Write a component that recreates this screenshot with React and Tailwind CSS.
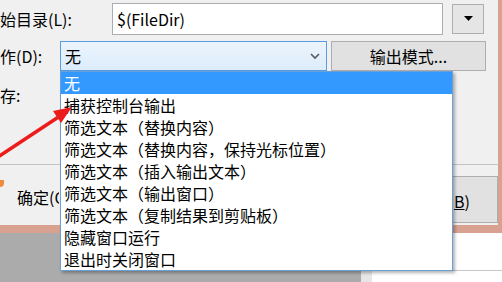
import React from "react";

const items = [
  "无",
  "捕获控制台输出",
  "筛选文本（替换内容）",
  "筛选文本（替换内容，保持光标位置）",
  "筛选文本（插入输出文本）",
  "筛选文本（输出窗口）",
  "筛选文本（复制结果到剪贴板）",
  "隐藏窗口运行",
  "退出时关闭窗口",
];

const font = { fontFamily: '"Noto Sans CJK SC", "Noto Sans", sans-serif' };

const App = () => {
  return (
    <div
      className="relative w-[502px] h-[282px] overflow-hidden bg-[#f0f0f0] text-black text-[16px]"
      style={font}
    >
      {/* dialog */}
      <div className="h-[233px] border-r-4 border-b-8 border-[#d9a18f] flex flex-col">
        {/* start dir row */}
        <div className="mt-[3px] h-[32px] flex items-center">
          <span className="w-[112px] leading-none">始目录(L):</span>
          <div className="w-[331px] h-[32px] bg-white border border-[#abadb3] flex items-center pl-[4px]">
            $(FileDir)
          </div>
          <div className="ml-[9px] w-[32px] h-[30px] border border-[#adadad] bg-[#e5e5e5] flex items-center justify-center">
            <svg width="9" height="6" viewBox="0 0 9 6">
              <polygon points="0,0 9,0 4.5,5" fill="#000" />
            </svg>
          </div>
        </div>

        {/* action row */}
        <div className="mt-[6px] h-[30px] flex items-center">
          <span className="w-[60px] leading-none">作(D):</span>
          <div className="w-[267px] h-[30px] border border-[#569de5] bg-gradient-to-b from-[#ecf4fc] to-[#dcecfc] flex items-center justify-between pl-[4px] pr-[6px]">
            <span>无</span>
            <svg width="10" height="7" viewBox="0 0 10 7">
              <polyline points="1,1 5,5 9,1" fill="none" stroke="#5a5a5a" strokeWidth="1.6" />
            </svg>
          </div>
          <div className="ml-[4px] w-[155px] h-[30px] border border-[#adadad] bg-[#e1e1e1] flex items-center justify-center">
            输出模式...
          </div>
        </div>

        {/* save row */}
        <div className="mt-[14px] h-[20px] flex items-center">
          <span className="leading-none">存:</span>
        </div>

        {/* separator */}
        <div className="mt-[59px] h-px bg-[#c4c4c4]" />

        {/* buttons row */}
        <div className="flex-1 flex">
          <div className="w-[4px] h-[7px] mt-[15px] bg-[#f08a3c] rounded-br-full" />
          <span className="ml-[13px] mt-[24px] w-[42px] h-[18px] leading-none overflow-hidden whitespace-nowrap">
            确定(O)
          </span>
          <div className="ml-auto w-[46px] mt-[11px] mb-[2px] border border-[#adadad] bg-[#e1e1e1] flex items-center pl-[1px] pt-[2px]">
            <span className="underline">B</span>)
          </div>
        </div>
      </div>

      {/* desktop behind */}
      <div className="h-[49px] flex">
        <div className="w-[361px] bg-[#ababab]" />
        <div className="w-[11px] bg-[#e6e6e6]" />
        <div className="flex-1 bg-white">
          <div className="mt-[37px] h-px bg-[#c8c8c8]" />
        </div>
      </div>

      {/* opened dropdown list */}
      <div className="absolute left-[60px] top-[71px] w-[393px] bg-white border border-[#6a9fd8] shadow-[2px_2px_3px_rgba(0,0,0,0.3)]">
        {items.map((item, i) => (
          <div
            key={item}
            className={`h-[22px] leading-[22px] pl-[3px] whitespace-nowrap ${
              i === 0 ? "bg-[#3399ff] text-white" : "text-black"
            }`}
          >
            {item}
          </div>
        ))}
      </div>

      {/* red annotation arrow */}
      <svg className="absolute left-0 top-0 pointer-events-none" width="502" height="282">
        <line x1="-2" y1="157" x2="60" y2="116" stroke="#ec1c1c" strokeWidth="3.5" />
        <polygon points="72,107 61,123 53,111" fill="#ec1c1c" />
      </svg>
    </div>
  );
};

export default App;
